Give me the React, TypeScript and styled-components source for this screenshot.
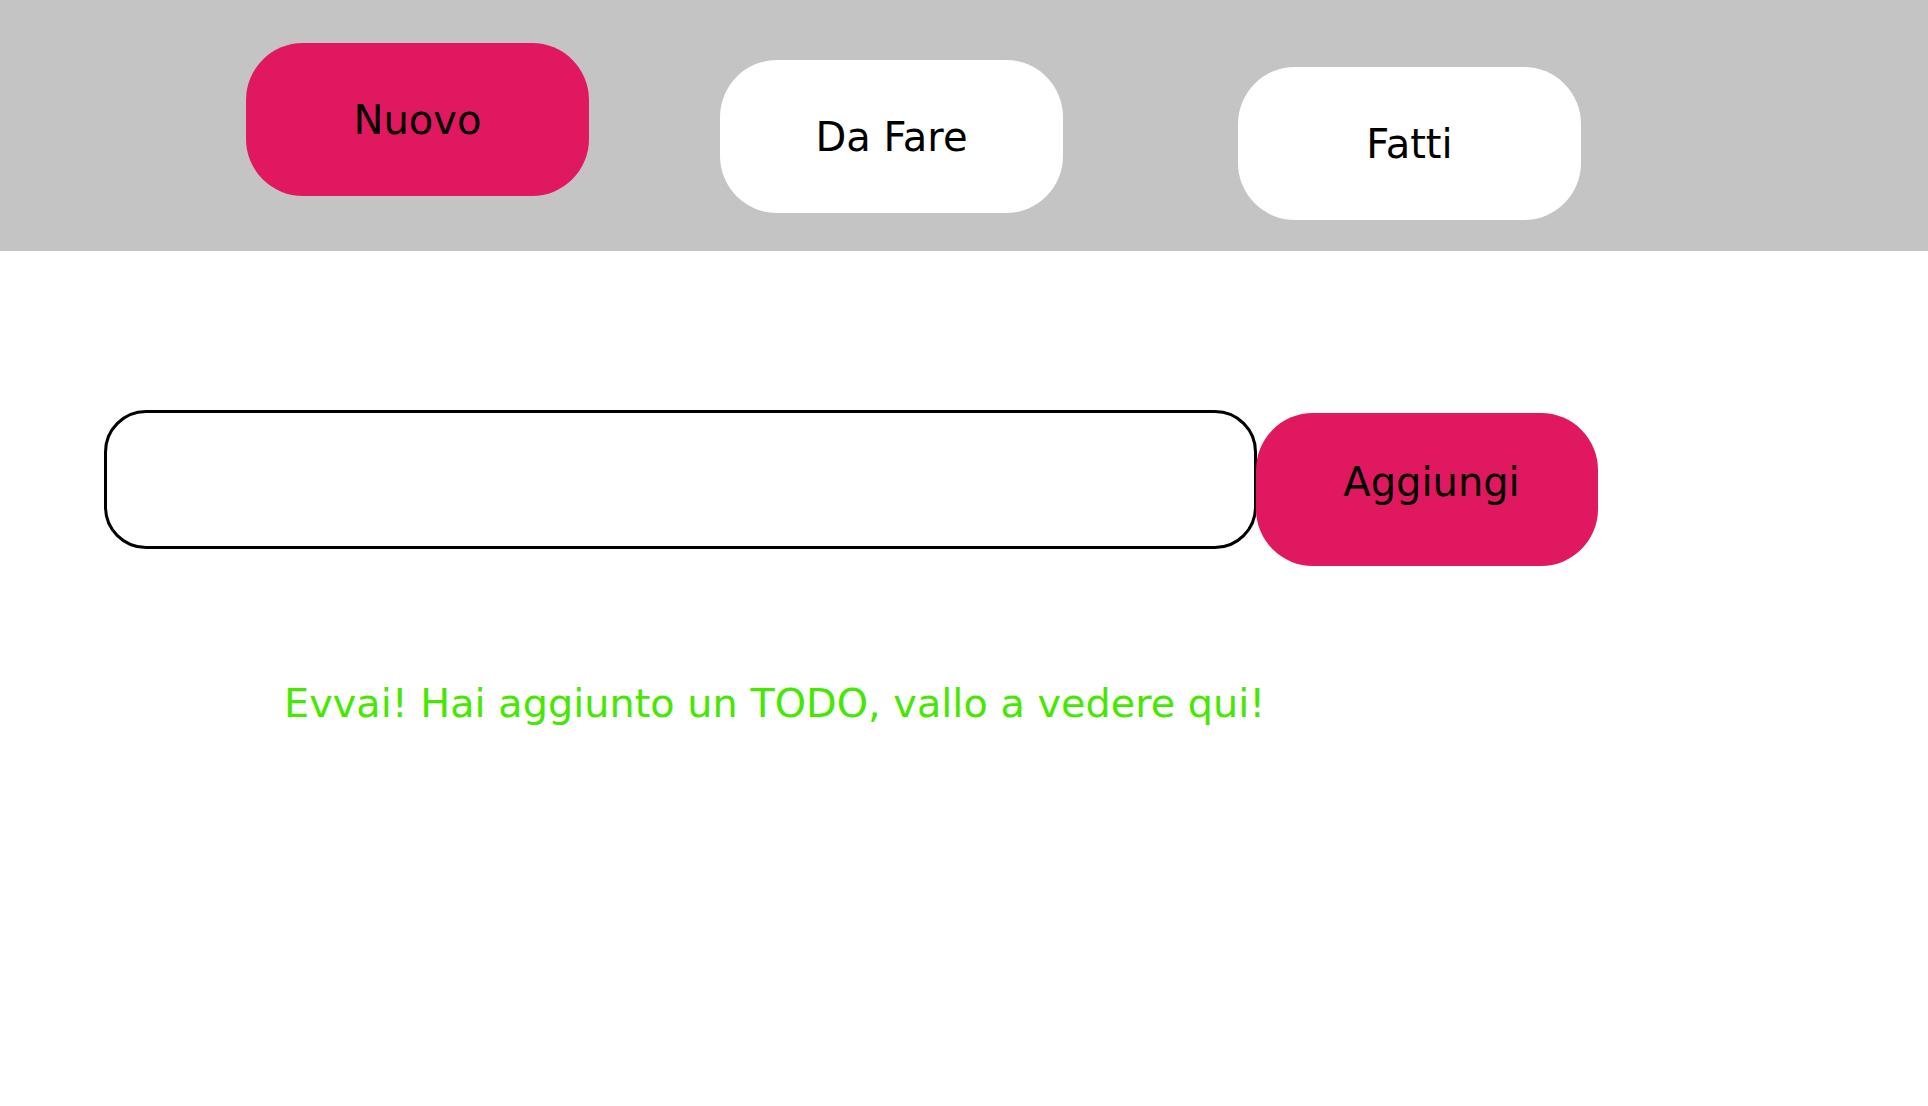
import React from "react";
import styled, { createGlobalStyle } from "styled-components";

const GlobalStyle = createGlobalStyle`
  html, body {
    margin: 0;
    padding: 0;
    background: #ffffff;
    font-family: "DejaVu Sans", "Liberation Sans", sans-serif;
  }
  * { box-sizing: border-box; }
`;

const Header = styled.header`
  display: flex;
  align-items: flex-start;
  height: 251px;
  background: #c4c4c4;
`;

const NavButton = styled.button<{ $active?: boolean; $left: number; $top: number }>`
  display: flex;
  align-items: center;
  justify-content: center;
  width: 343px;
  height: 153px;
  margin-left: ${(p) => p.$left}px;
  margin-top: ${(p) => p.$top}px;
  padding: 0;
  border: none;
  border-radius: 57px;
  background: ${(p) => (p.$active ? "#e0185f" : "#ffffff")};
  color: #000000;
  font-family: "DejaVu Sans", "Liberation Sans", sans-serif;
  font-size: 40px;
  line-height: normal;
  cursor: pointer;
`;

const Main = styled.main`
  display: flex;
  flex-direction: column;
`;

const FormRow = styled.form`
  display: flex;
  align-items: flex-start;
  margin-top: 159px;
  padding-left: 104px;
`;

const TodoInput = styled.input`
  width: 1153px;
  height: 139px;
  border: 3px solid #000000;
  border-radius: 42px;
  background: #ffffff;
  padding: 0 40px;
  font-family: "DejaVu Sans", "Liberation Sans", sans-serif;
  font-size: 40px;
  outline: none;
`;

const AddButton = styled.button`
  display: flex;
  align-items: center;
  justify-content: center;
  width: 342px;
  height: 153px;
  margin-left: -1px;
  margin-top: 3px;
  padding: 0 0 16px 9px;
  border: none;
  border-radius: 57px;
  background: #e0185f;
  color: #000000;
  font-family: "DejaVu Sans", "Liberation Sans", sans-serif;
  font-size: 40px;
  line-height: normal;
  cursor: pointer;
`;

const Message = styled.p`
  margin: 114px 0 0 284px;
  color: #45e800;
  font-family: "DejaVu Sans", "Liberation Sans", sans-serif;
  font-size: 39.8px;
  line-height: normal;
`;

export default function App() {
  return (
    <>
      <GlobalStyle />
      <Header>
        <NavButton $active $left={246} $top={43}>
          Nuovo
        </NavButton>
        <NavButton $left={131} $top={60}>
          Da Fare
        </NavButton>
        <NavButton $left={175} $top={67}>
          Fatti
        </NavButton>
      </Header>
      <Main>
        <FormRow onSubmit={(e) => e.preventDefault()}>
          <TodoInput type="text" aria-label="Nuovo TODO" />
          <AddButton type="submit">Aggiungi</AddButton>
        </FormRow>
        <Message>Evvai! Hai aggiunto un TODO, vallo a vedere qui!</Message>
      </Main>
    </>
  );
}
